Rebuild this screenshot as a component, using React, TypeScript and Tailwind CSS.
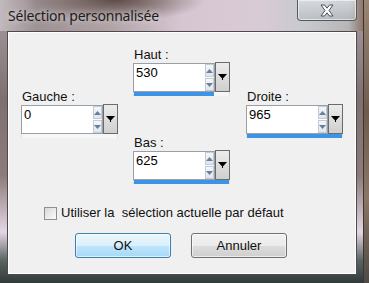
function SpinField({
  label,
  value,
  fill,
}: {
  label: string;
  value: string;
  fill: number;
}) {
  return (
    <div className="flex flex-col w-[97px] shrink-0">
      <div className="h-[16px] leading-[16px] text-[13px] pl-[1px] text-[#111]">{label}</div>
      <div className="flex">
        <div className="flex-1 h-[29px] bg-white border border-[#9aa0a8] flex items-start">
          <span className="flex-1 pl-[2px] pt-[1px] text-[13px] leading-[16px] text-black">
            {value}
          </span>
          <div className="flex flex-col gap-[1px] w-[9px]">
            <div className="h-[13px] border border-[#c2cad4] bg-[linear-gradient(180deg,#f4f7fa,#dfe6ee)] flex items-center justify-center">
              <svg width="7" height="4" viewBox="0 0 7 4">
                <path d="M0 4 L3.5 0 L7 4 Z" fill="#6a7d99" />
              </svg>
            </div>
            <div className="h-[13px] border border-[#c2cad4] bg-[linear-gradient(180deg,#f4f7fa,#dfe6ee)] flex items-center justify-center">
              <svg width="7" height="4" viewBox="0 0 7 4">
                <path d="M0 0 L3.5 4 L7 0 Z" fill="#6a7d99" />
              </svg>
            </div>
          </div>
        </div>
        <div className="w-[15px] h-[30px] -mt-[1px] border border-[#6b6b6b] bg-[linear-gradient(180deg,#ececec,#cfcfcf)] flex items-center justify-center">
          <svg width="9" height="6" viewBox="0 0 9 6">
            <path d="M0 0 L9 0 L4.5 5 Z" fill="#000" />
            <rect x="4" y="4" width="1" height="2" fill="#000" />
          </svg>
        </div>
      </div>
      <div className="h-[4px] bg-[#f6f6f6] border-x border-[#e2e2e2]">
        <div className="h-full bg-[#3d94e6]" style={{ width: `${fill}%` }} />
      </div>
    </div>
  );
}

export default function App() {
  return (
    <div className="w-[369px] h-[283px] flex overflow-hidden font-['Liberation_Sans',Arial,sans-serif]">
      <div className="w-[364px] h-[283px] shrink-0 flex flex-col bg-[linear-gradient(180deg,#a99ea3_0%,#7e7071_35%,#8d7b7b_62%,#e4d6e4_82%,#5a6563_92%,#2f3a39_100%)] border-r border-[#3b3534]">
        {/* title bar */}
        <div className="h-[31px] shrink-0 flex items-start bg-[radial-gradient(ellipse_90px_22px_at_115px_0px,#5e4c47_0%,rgba(94,76,71,0)_100%),linear-gradient(90deg,#c1b9bd_0%,#9d9194_10%,#b0a3a6_30%,#d6c6d1_50%,#d9cbd6_72%,#c6c9cd_84%,#b7b5b8_96%,#8e7568_100%)]">
          <div className="pl-[8px] pt-[6px] text-[14px] tracking-[-0.2px] leading-[20px] text-[#1c1c1c] font-['Noto_Sans',sans-serif] [text-shadow:0_0_6px_rgba(255,255,255,0.7)]">
            Sélection personnalisée
          </div>
          <div className="ml-auto mr-[6px] w-[60px] h-[21px] rounded-b-[4px] border border-t-0 border-[#555a5e] shadow-[inset_0_0_0_1px_rgba(255,255,255,0.55)] bg-[linear-gradient(180deg,rgba(220,224,228,0.75),rgba(180,186,192,0.6))] flex items-center justify-center">
            <svg width="16" height="13" viewBox="0 0 16 13">
              <path
                d="M2 1 L5.5 1 L8 4.2 L10.5 1 L14 1 L10 6.5 L14 12 L10.5 12 L8 8.8 L5.5 12 L2 12 L6 6.5 Z"
                fill="#ffffff"
                stroke="#4c5258"
                strokeWidth="1"
                strokeLinejoin="round"
              />
            </svg>
          </div>
        </div>
        {/* client area */}
        <div className="mx-[7px] w-[350px] h-[244px] shrink-0 bg-[#f0f0f0] border border-[#4f4a4a] shadow-[inset_0_0_0_1px_#ffffff] flex flex-col">
          <div className="flex h-[174px] shrink-0">
            <div className="pl-[13px] pt-[57px]">
              <SpinField label="Gauche :" value="0" fill={0} />
            </div>
            <div className="pl-[15px] pt-[15px] flex flex-col gap-[39px]">
              <SpinField label="Haut :" value="530" fill={84} />
              <SpinField label="Bas :" value="625" fill={100} />
            </div>
            <div className="pl-[16px] pt-[57px]">
              <SpinField label="Droite :" value="965" fill={100} />
            </div>
          </div>
          <div className="flex items-center pl-[36px] h-[14px] shrink-0">
            <div className="w-[13px] h-[13px] border border-[#8e8f8f] bg-[linear-gradient(135deg,#d8d8d8,#fbfbfb)]" />
            <span className="pl-[4px] text-[13px] leading-[16px] text-[#111] whitespace-pre">
              Utiliser la  sélection actuelle par défaut
            </span>
          </div>
          <div className="flex pl-[67px] pt-[13px] gap-[20px] shrink-0">
            <button className="w-[96px] h-[25px] rounded-[3px] border border-[#3c7fb1] bg-[linear-gradient(180deg,#eaf6fd_0%,#d9f0fc_50%,#bee6fd_51%,#a7d9f5_100%)] shadow-[inset_0_0_0_1px_rgba(255,255,255,0.6)] text-[13px] text-[#111]">
              OK
            </button>
            <button className="w-[96px] h-[25px] rounded-[3px] border border-[#707070] bg-[linear-gradient(180deg,#f2f2f2_0%,#ebebeb_50%,#dddddd_51%,#cfcfcf_100%)] shadow-[inset_0_0_0_1px_rgba(255,255,255,0.6)] text-[13px] text-[#111]">
              Annuler
            </button>
          </div>
        </div>
      </div>
      <div className="w-[5px] h-[283px] shrink-0 bg-[linear-gradient(180deg,#9a8574,#6f5b4c_40%,#8a7566_70%,#4f4a45)]" />
    </div>
  );
}
